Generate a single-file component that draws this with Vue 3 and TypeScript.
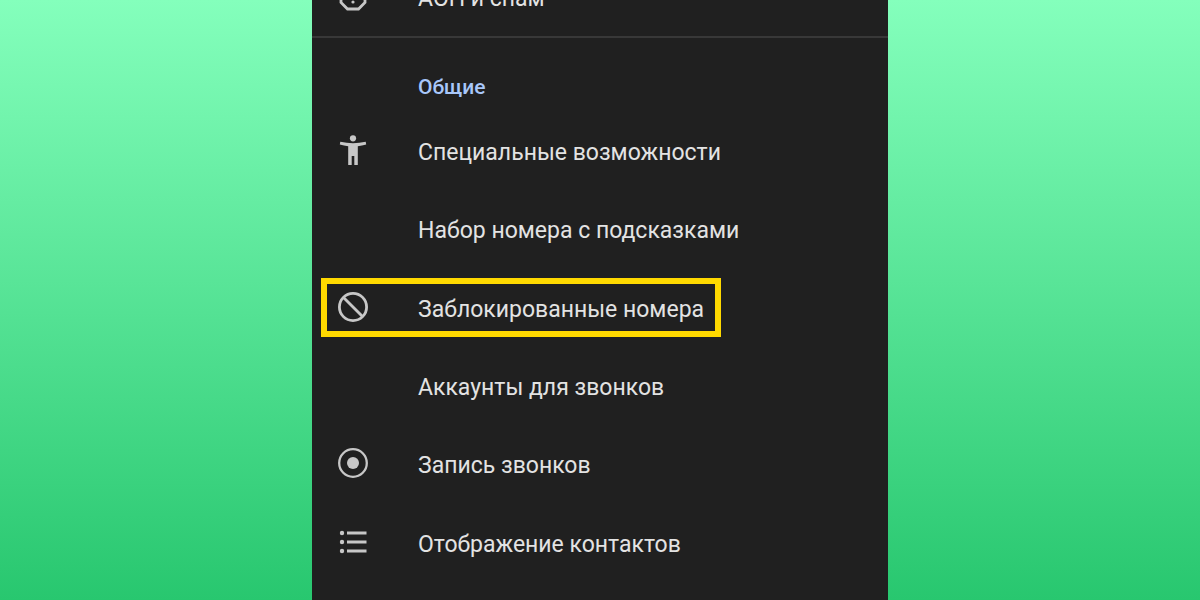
<script setup lang="ts">
type Icon = 'accessibility' | 'block' | 'record' | 'list'

interface Item {
  label: string
  icon?: Icon
  marked?: boolean
}

const items: Item[] = [
  { label: 'Специальные возможности', icon: 'accessibility' },
  { label: 'Набор номера с подсказками' },
  { label: 'Заблокированные номера', icon: 'block', marked: true },
  { label: 'Аккаунты для звонков' },
  { label: 'Запись звонков', icon: 'record' },
  { label: 'Отображение контактов', icon: 'list' },
]
</script>

<template>
  <main class="page">
    <section class="settings">
      <div class="previous">
        <a href="#" class="item">
          <svg class="icon" viewBox="0 0 36 36" aria-hidden="true">
            <path class="line" d="M12.500 6h11L30 12.500v11L23.500 30h-11L6 23.500v-11z" />
            <path d="M17 10h3v9h-3z" />
            <circle cx="18" cy="23" r="1.600" />
          </svg>
          <span class="label">АОН и спам</span>
        </a>
      </div>
      <h2 class="heading">Общие</h2>
      <nav class="list">
        <a v-for="item in items" :key="item.label" href="#" class="item" :class="{ marked: item.marked }">
          <svg class="icon" viewBox="0 0 36 36" aria-hidden="true">
            <template v-if="item.icon === 'accessibility'">
              <circle cx="18" cy="6.300" r="3.100" />
              <path d="M5.300 9.800Q18 12.600 30.700 9.800L31.200 12.500Q27 13.700 22.800 14.200V33H19.300V24H16.700V33H13.200V14.200Q9 13.700 4.800 12.500Z" />
            </template>
            <template v-else-if="item.icon === 'block'">
              <circle class="line" cx="18" cy="18" r="13.600" />
              <path class="line" d="M8.500 8.500l19 19" />
            </template>
            <template v-else-if="item.icon === 'record'">
              <circle class="line thin" cx="18" cy="18" r="13.800" />
              <circle cx="18" cy="18" r="6" />
            </template>
            <template v-else-if="item.icon === 'list'">
              <circle cx="7" cy="9" r="2.200" />
              <circle cx="7" cy="18" r="2.200" />
              <circle cx="7" cy="27" r="2.200" />
              <path d="M12 7.500h19.500v3H12zM12 16.500h19.500v3H12zM12 25.500h19.500v3H12z" />
            </template>
          </svg>
          <span class="label">{{ item.label }}</span>
        </a>
      </nav>
    </section>
  </main>
</template>

<style>
body {
  margin: 0;
}
</style>

<style scoped>
.page {
  display: flex;
  justify-content: center;
  min-height: 100vh;
  background: linear-gradient(#84ffbc, #28c76f);
  font-family: Roboto, "Noto Sans", sans-serif;
}
.settings {
  display: flex;
  flex-direction: column;
  box-sizing: border-box;
  width: 48%;
  padding-bottom: 19px;
  background: #202020;
}
.previous {
  display: flex;
  flex-direction: column;
  justify-content: flex-end;
  height: 36px;
  overflow: hidden;
  border-bottom: 2px solid #383838;
}
.heading {
  margin: 35px 0 10px 106px;
  font-size: 21px;
  line-height: 28px;
  font-weight: 500;
  color: #a8c7fa;
}
.list {
  display: flex;
  flex: 1;
  flex-direction: column;
}
.item {
  position: relative;
  display: flex;
  flex: 1 0 auto;
  align-items: center;
  gap: 47px;
  min-height: 78px;
  padding-left: 23px;
  color: #e3e3e3;
  text-decoration: none;
}
.previous .item {
  flex: none;
}
.icon {
  width: 36px;
  height: 36px;
  flex-shrink: 0;
  fill: #c7c7c7;
}
.line {
  fill: none;
  stroke: #c7c7c7;
  stroke-width: 2.8;
}
.thin {
  stroke-width: 2.3;
}
.label {
  padding-top: 6px;
  font-size: 23px;
  line-height: 30px;
  white-space: nowrap;
}
.previous .label {
  padding-top: 4px;
}
.marked::after {
  content: "";
  position: absolute;
  left: 9px;
  top: calc(50% - 29px);
  width: 388px;
  height: 47px;
  border: 6px solid #ffd900;
}
</style>
